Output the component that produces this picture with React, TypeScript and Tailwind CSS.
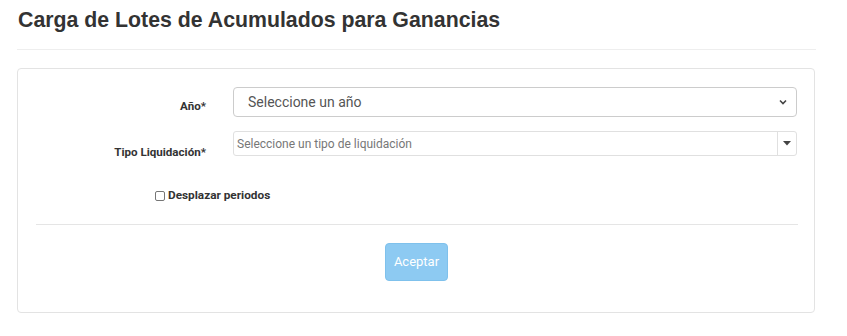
import React from "react";

export default function App() {
  return (
    <div className="w-[847px] h-[336px] bg-white overflow-hidden" style={{ fontFamily: "Roboto, 'Liberation Sans', sans-serif" }}>
      <div className="pl-[17px] pr-[31px]">
        <h1 className="pt-[6px] h-[49px] text-[21.3px] font-bold text-[#333333] leading-[28px] pl-[1px]" style={{ fontFamily: "'Liberation Sans', Arial, sans-serif" }}>
          Carga de Lotes de Acumulados para Ganancias
        </h1>
        <div className="h-px bg-[#eeeeee] w-[799px]" />
        <div className="mt-[18px] w-[798px] h-[245px] border border-[#e3e3e3] rounded-[4px] pl-[18px] pr-[17px] pt-[18px]">
          <div className="flex items-start">
            <div className="w-[170px] text-right text-[11.6px] font-bold text-[#333] pt-[12px] leading-[14px]">Año*</div>
            <div className="ml-[27px] flex-1 h-[30px] border border-[#cccccc] rounded-[4px] flex items-center justify-between pl-[14px] pr-[8px]">
              <span className="text-[14px] text-[#555555]">Seleccione un año</span>
              <svg width="10" height="8" viewBox="0 0 10 8"><path d="M2 2.5 L5 5.5 L8 2.5" stroke="#444" strokeWidth="1.6" fill="none" /></svg>
            </div>
          </div>
          <div className="flex items-start mt-[14px]">
            <div className="w-[170px] text-right text-[11.6px] font-bold text-[#333] pt-[14px] leading-[14px]">Tipo Liquidación*</div>
            <div className="ml-[27px] flex-1 h-[25px] border border-[#e0e0e0] rounded-[3px] flex items-stretch">
              <div className="flex-1 flex items-center pl-[3px] text-[12px] text-[#777777]">Seleccione un tipo de liquidación</div>
              <div className="w-[19px] border-l border-[#e0e0e0] flex items-center justify-center">
                <svg width="8" height="5" viewBox="0 0 8 5"><path d="M0 0 L8 0 L4 4.5 Z" fill="#444" /></svg>
              </div>
            </div>
          </div>
          <div className="flex items-center mt-[30px] pl-[119px] h-[14px]">
            <span className="w-[10px] h-[10px] border border-[#767676] rounded-[2px] bg-white" />
            <span className="ml-[3px] text-[11.8px] font-bold text-[#333]">Desplazar periodos</span>
          </div>
          <div className="mt-[21px] h-px bg-[#e5e5e5] w-[762px]" />
          <div className="flex justify-center mt-[18px]">
            <button className="w-[63px] h-[38px] rounded-[4px] bg-[#8dcaf2] border border-[#7fc1ec] text-white text-[13px] font-normal">Aceptar</button>
          </div>
        </div>
      </div>
    </div>
  );
}
